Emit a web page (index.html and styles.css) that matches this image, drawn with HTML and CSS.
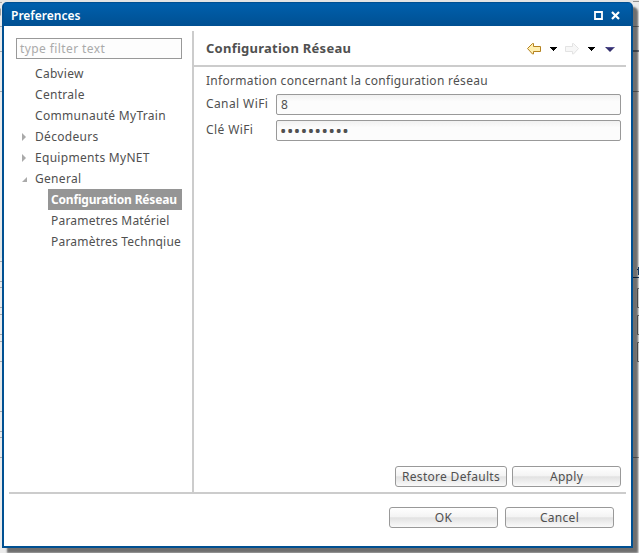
FILE: index.html
```html
<!DOCTYPE html>
<html lang="fr">
<head>
<meta charset="utf-8">
<title>Preferences</title>
<link rel="stylesheet" href="styles.css">
</head>
<body>
<main class="dialog">
  <header class="titlebar">
    <span class="title">Preferences</span>
    <svg class="window-controls" width="30" height="12" viewBox="0 0 30 12"><path d="M1 3h7v7h-7z" fill="none" stroke="#fff" stroke-width="1.8"/><path d="M18 3l7 7M25 3l-7 7" stroke="#fff" stroke-width="2.200"/></svg>
  </header>
  <div class="workspace">
    <aside class="sidebar">
      <div class="filter">type filter text</div>
      <ul class="tree">
        <li>Cabview</li>
        <li>Centrale</li>
        <li>Communauté MyTrain</li>
        <li><svg class="arrow" width="8" height="9"><path d="M2 1l4 4-4 4z"/></svg>Décodeurs</li>
        <li><svg class="arrow" width="8" height="9"><path d="M2 1l4 4-4 4z"/></svg>Equipments MyNET</li>
        <li><svg class="arrow" width="8" height="9"><path d="M7 3v5h-5z"/></svg>General</li>
        <li class="child selected"><span>Configuration Réseau</span></li>
        <li class="child"><span>Parametres Matériel</span></li>
        <li class="child"><span>Paramètres Technqiue</span></li>
      </ul>
    </aside>
    <section class="page">
      <header class="page-head">
        <h1>Configuration Réseau</h1>
        <svg class="nav" width="90" height="14" viewBox="0 0 90 14">
          <path d="M1.500 7.500L6.500 2.500H7.500V5.500H14.500V10.500H7.500V13H6.500Z" fill="#ffefb0" stroke="#b58220"/>
          <path d="M24 6h7v1h-1v1h-1v1h-1v1h-1v-1h-1v-1h-1v-1h-1z" fill="#000"/>
          <path d="M52.500 7.500L47.500 2.500H46.500V5.500H39.500V10.500H46.500V13H47.500Z" fill="#f7f7f7" stroke="#e3e3e3"/>
          <path d="M62 6h7v1h-1v1h-1v1h-1v1h-1v-1h-1v-1h-1v-1h-1z" fill="#000"/>
          <path d="M79 6h10l-5 5z" fill="#35306e"/><path d="M81 6.500h7" stroke="#555092"/>
        </svg>
      </header>
      <div class="form">
        <p>Information concernant la configuration réseau</p>
        <div class="field"><span class="label">Canal WiFi</span><div class="input">8</div></div>
        <div class="field"><span class="label">Clé WiFi</span><div class="input dots">••••••••••</div></div>
      </div>
      <div class="page-actions"><button class="restore">Restore Defaults</button><button>Apply</button></div>
    </section>
  </div>
  <footer class="footer"><button>OK</button><button>Cancel</button></footer>
</main>
<svg class="backdrop" width="639" height="553">
  <path d="M0 0h639v2H0z" fill="#e4e4e4"/>
  <path d="M0 230h2v28H0zM0 380h2v20H0z" fill="#e2e6e6"/>
  <path d="M0 2.500h2M0 26.500h2M0 51.500h2M0 91.500h2M0 261.500h2M0 281.500h2M0 287.500h2M0 307.500h2M0 314.500h2M0 334.500h2M0 341.500h2M0 361.500h2M0 411.500h2M0 431.500h2M0 437.500h2M0 457.500h2" stroke="#a8a8a8"/>
  <path d="M633 1.500h6M633 26.500h6M633 91.500h6M633 457.500h6" stroke="#929292"/>
  <path d="M633 51h6" stroke="#7a8491" stroke-width="2"/>
  <path d="M633 277.500h6M637 269.500h2M638.500 267v8" stroke="#163f70"/>
  <path d="M640 288.500h-2.500v19h2.500M640 315.500h-2.500v19h2.500M640 342.500h-2.500v19h2.500" fill="none" stroke="#777"/>
  <path d="M0 8.500v7" stroke="#555"/>
</svg>
</body>
</html>
```
FILE: styles.css
```css
* { box-sizing: border-box; }
body {
  margin: 0;
  width: 639px;
  height: 553px;
  padding: 2px 0 0 2px;
  overflow: hidden;
  position: relative;
  background: #ebebeb;
  color: #505050;
  font: 12px/21px "Noto Sans", sans-serif;
  letter-spacing: .3px;
  white-space: nowrap;
}
.backdrop { position: absolute; inset: 0; z-index: -1; }
.dialog {
  width: 631px;
  height: 546px;
  display: flex;
  flex-direction: column;
  background: #fff;
  border: 2px solid #005092;
  border-radius: 5px 5px 0 0;
  box-shadow: 5px 5px 2px rgba(0, 0, 0, .53);
}
.titlebar {
  height: 22px;
  flex: none;
  display: flex;
  align-items: center;
  justify-content: space-between;
  padding: 0 7px;
  background: linear-gradient(#005fac, #005092);
  box-shadow: 0 -1px #005cab;
  color: #fff;
}
.title { font-weight: 600; letter-spacing: 0; }
.workspace {
  display: flex;
  height: 463px;
  margin: 5px 5px 0;
  border-bottom: 2px solid #ccc;
}
.sidebar {
  width: 185px;
  flex: none;
  padding: 7px 10px 0 7px;
  border-right: 2px solid #ccc;
}
.filter {
  height: 21px;
  line-height: 19px;
  border: 1px solid #999;
  padding-left: 3px;
  color: #aaa;
  background: #fdfdfd;
  letter-spacing: .4px;
}
.tree { list-style: none; margin: 4px 0 0; padding: 0; }
.tree li { height: 21px; line-height: 22px; padding-left: 19px; position: relative; }
.tree li.child { padding-left: 32px; }
.child span { display: block; padding-left: 3px; height: 21px; letter-spacing: .2px; }
.tree .selected span { background: #959595; color: #fff; font-weight: 700; line-height: 21px; letter-spacing: -.18px; }
.arrow { position: absolute; left: 4px; top: 6px; fill: #aaa; }
.page { flex: 1; display: flex; flex-direction: column; }
.page-head {
  height: 36px;
  border-bottom: 2px solid #ccc;
  display: flex;
  align-items: center;
  justify-content: space-between;
  padding: 0 10px 0 12px;
}
h1 { margin: 0; font-size: 13px; font-weight: 700; line-height: 20px; letter-spacing: .25px; }
.form { padding: 3px 5px 0 12px; }
p { margin: 0 0 4px; height: 20px; }
.field { display: flex; height: 21px; margin-bottom: 5px; line-height: 20px; }
.label { width: 70px; flex: none; letter-spacing: .4px; }
.input {
  flex: 1;
  border: 1px solid #999;
  border-radius: 2px;
  padding-left: 4px;
  background: linear-gradient(#f1f1f1, #fcfcfc 35%);
}
.dots { font-size: 17px; line-height: 19px; letter-spacing: .53px; padding-left: 3px; }
.page-actions { margin-top: auto; display: flex; justify-content: flex-end; gap: 5px; padding: 0 5px 5px; }
button {
  width: 109px;
  height: 21px;
  padding: 0;
  border: 1px solid #999;
  border-radius: 3px;
  background: linear-gradient(#fff, #f4f4f4 45%, #e2e2e2 52%, #fafafa);
  color: #505050;
  font: 12px/19px "Noto Sans", sans-serif;
  letter-spacing: .3px;
}
.restore { width: 112px; }
.footer { display: flex; justify-content: flex-end; gap: 7px; padding: 13px 17px 0 0; }
```
